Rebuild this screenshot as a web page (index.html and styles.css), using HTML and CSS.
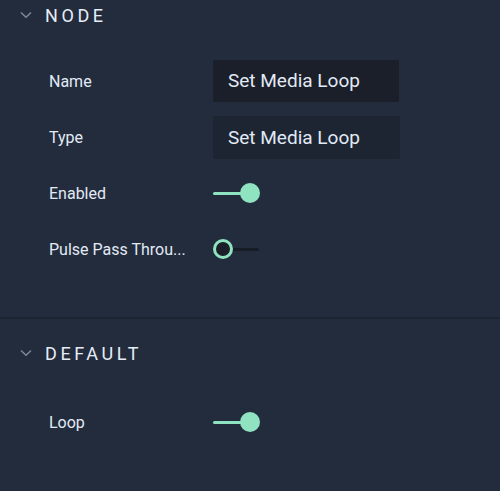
FILE: index.html
```html
<!DOCTYPE html>
<html>
<head>
<meta charset="utf-8">
<link rel="stylesheet" href="styles.css">
</head>
<body>
<section class="section node">
  <div class="header">
    <svg class="chev" width="12" height="8" viewBox="0 0 12 8"><path d="M1 1.5 L6 6.2 L11 1.5" fill="none" stroke="#7f8898" stroke-width="1.5"/></svg>
    <span class="title">NODE</span>
  </div>
  <div class="rows">
    <div class="row"><span class="label">Name</span><div class="input dark">Set Media Loop</div></div>
    <div class="row"><span class="label">Type</span><div class="input">Set Media Loop</div></div>
    <div class="row"><span class="label">Enabled</span><div class="toggle on"><span class="track"></span><span class="thumb"></span></div></div>
    <div class="row"><span class="label">Pulse Pass Throu...</span><div class="toggle off"><span class="track"></span><span class="thumb"></span></div></div>
  </div>
</section>
<div class="divider"></div>
<section class="section def">
  <div class="header">
    <svg class="chev" width="12" height="8" viewBox="0 0 12 8"><path d="M1 1.5 L6 6.2 L11 1.5" fill="none" stroke="#7f8898" stroke-width="1.5"/></svg>
    <span class="title">DEFAULT</span>
  </div>
  <div class="rows">
    <div class="row"><span class="label">Loop</span><div class="toggle on"><span class="track"></span><span class="thumb"></span></div></div>
  </div>
</section>
</body>
</html>
```

FILE: styles.css
```css
html, body {
  margin: 0;
  padding: 0;
  background: #222c3c;
  width: 500px;
  height: 491px;
  overflow: hidden;
  font-family: Roboto, "Liberation Sans", sans-serif;
  color: #e2eaf6;
}
.header {
  display: flex;
  align-items: center;
  height: 30px;
  padding-left: 20px;
}
.chev { margin-right: 13px; margin-top: 0; }
.title {
  font-size: 18px;
  font-weight: 400;
  letter-spacing: 3.6px;
  color: #e6edf8;
}
.rows {
  display: flex;
  flex-direction: column;
  padding-left: 49px;
}
.row {
  display: flex;
  align-items: center;
  height: 56px;
}
.node .rows { padding-top: 23px; }
.node { height: 317px; }
.label {
  width: 164px;
  font-size: 16px;
  white-space: nowrap;
}
.input {
  width: 172px;
  height: 43px;
  line-height: 43px;
  padding-left: 15px;
  background: #1d2533;
  font-size: 19px;
  border-radius: 2px;
}
.input.dark {
  background: #1a1f29;
  height: 42px;
  line-height: 42px;
  width: 171px;
}
.toggle {
  position: relative;
  width: 48px;
  height: 22px;
}
.toggle .track {
  position: absolute;
  left: 0;
  top: 10px;
  height: 3px;
  width: 46px;
  border-radius: 2px;
}
.toggle .thumb {
  position: absolute;
  top: 1px;
  width: 20px;
  height: 20px;
  border-radius: 50%;
  box-sizing: border-box;
}
.toggle.on .track { background: #8fe3c0; width: 36px; }
.toggle.on .thumb { left: 27px; background: #8fe3c0; }
.toggle.off .track { background: #171c26; left: 10px; width: 36px; }
.toggle.off .thumb { left: 0; background: #1a1f29; border: 3px solid #8fe3c0; }
.divider {
  height: 2px;
  background: #1b2431;
}
.def .header { margin-top: 19px; }
.def .rows { padding-top: 26px; }
```
